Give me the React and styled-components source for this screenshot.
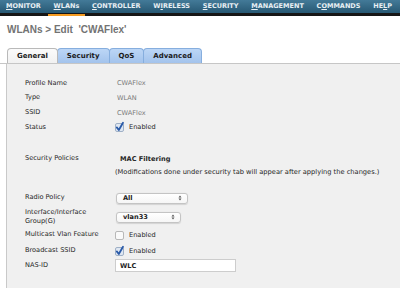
import React from "react";
import styled, { createGlobalStyle } from "styled-components";

const Global = createGlobalStyle`
  html, body { margin: 0; padding: 0; background: #ffffff; }
  body { font-family: "DejaVu Sans", Verdana, sans-serif; overflow: hidden; }
`;

const Page = styled.div`
  width: 400px;
  height: 288px;
  display: flex;
  flex-direction: column;
  background: #ffffff;
`;

const Nav = styled.nav`
  display: flex;
  justify-content: space-between;
  height: 16px;
  padding-right: 2px;
  background: linear-gradient(#437a98 0, #275873 13px, #161616 13px, #161616 16px);
`;

const NavItem = styled.a`
  box-sizing: border-box;
  height: 16px;
  padding: 0 6px 1px;
  font: bold 6.5px "DejaVu Sans", Verdana, sans-serif;
  line-height: 13px;
  color: #e8eff4;
  border-bottom: 2px solid ${(p) => (p.$active ? "#f49b22" : "transparent")};
  white-space: nowrap;
  u { text-decoration-thickness: 1px; text-underline-offset: 1px; }
`;

const Title = styled.h1`
  margin: 7px 0 0 7px;
  height: 14px;
  font: bold 10px "Liberation Sans", Arial, sans-serif;
  line-height: 14px;
  color: #737373;
  white-space: pre;
`;

const TabBar = styled.div`
  display: flex;
  margin-top: 11px;
  padding-left: 7px;
  border-bottom: 1px solid #c6c6c6;
`;

const Tab = styled.div`
  box-sizing: border-box;
  height: 15px;
  padding: 0 9px;
  margin-right: -1px;
  border: 1px solid ${(p) => (p.$active ? "#b9b9b9" : "#86aede")};
  border-bottom: none;
  border-radius: 4px 4px 0 0;
  background: ${(p) =>
    p.$active
      ? "linear-gradient(#fbfbfb, #f1f1f1)"
      : "linear-gradient(#bcd6f6, #a3c3ec)"};
  font: bold 7px "DejaVu Sans", Verdana, sans-serif;
  line-height: 14px;
  color: #1a1a1a;
  white-space: nowrap;
  position: relative;
  z-index: ${(p) => (p.$active ? 2 : 1)};
`;

const Panel = styled.div`
  flex: 1;
  margin-left: 6px;
  border-left: 1px solid #c9c9c9;
  background: #f0f0f0;
  padding: 12px 0 0 18px;
`;

const Row = styled.div`
  display: grid;
  grid-template-columns: 90px 1fr;
  align-items: center;
  height: ${(p) => p.$h}px;
  margin-top: ${(p) => p.$mt || 0}px;
`;

const Label = styled.div`
  font-size: 6.6px;
  line-height: 9.5px;
  color: #262626;
`;

const Value = styled.div`
  font-size: 6.6px;
  color: ${(p) => (p.$muted ? "#7a7a7a" : "#262626")};
  font-weight: ${(p) => (p.$bold ? "bold" : "normal")};
  padding-left: ${(p) => p.$indent || 0}px;
  display: flex;
  align-items: center;
  gap: 5px;
  white-space: nowrap;
`;

const Note = styled.div`
  font-size: 6.68px;
  color: #262626;
  white-space: nowrap;
`;

const SelectBox = styled.div`
  box-sizing: border-box;
  width: ${(p) => p.$w}px;
  height: 11px;
  margin-left: 1px;
  border: 1px solid #c4c4c4;
  border-radius: 3px;
  background: linear-gradient(#ffffff, #f6f6f6);
  box-shadow: 0 0.5px 1px rgba(0, 0, 0, 0.12);
  display: flex;
  align-items: center;
  justify-content: space-between;
  padding: 0 5px 0 6px;
  font: bold 6.6px "DejaVu Sans", Verdana, sans-serif;
  color: #222;
`;

const TextInput = styled.div`
  box-sizing: border-box;
  width: 121px;
  height: 13px;
  border: 1px solid #cdcdcd;
  background: #ffffff;
  display: flex;
  align-items: center;
  padding-left: 4px;
  font: bold 6.6px "DejaVu Sans", Verdana, sans-serif;
  color: #222;
`;

const Arrows = () => (
  <svg width="4" height="6" viewBox="0 0 4 6">
    <path d="M0.5 2.4 L2 0.6 L3.5 2.4 Z M0.5 3.6 L2 5.4 L3.5 3.6 Z" fill="#555" />
  </svg>
);

const Check = ({ checked }) => (
  <svg width="9" height="9" viewBox="0 0 9 9" style={{ overflow: "visible" }}>
    <rect
      x="0.5"
      y="0.5"
      width="8"
      height="8"
      rx="1.5"
      fill={checked ? "#dfe7f2" : "#fafafa"}
      stroke={checked ? "#9fb0c6" : "#b8b8b8"}
    />
    {checked && (
      <path
        d="M1.8 4.4 L3.8 7 L8 -0.2"
        fill="none"
        stroke="#2a5aa8"
        strokeWidth="1.8"
        strokeLinecap="round"
        strokeLinejoin="round"
      />
    )}
  </svg>
);

const navItems = [
  ["", "M", "ONITOR"],
  ["", "W", "LANs"],
  ["", "C", "ONTROLLER"],
  ["W", "I", "RELESS"],
  ["", "S", "ECURITY"],
  ["", "M", "ANAGEMENT"],
  ["C", "O", "MMANDS"],
  ["HE", "L", "P"],
];

export default function App() {
  return (
    <Page>
      <Global />
      <Nav>
        {navItems.map(([a, u, b], i) => (
          <NavItem key={i} $active={i === 1}>
            {a}
            <u>{u}</u>
            {b}
          </NavItem>
        ))}
      </Nav>
      <Title>{"WLANs > Edit  'CWAFlex'"}</Title>
      <TabBar>
        <Tab $active>General</Tab>
        <Tab>Security</Tab>
        <Tab>QoS</Tab>
        <Tab>Advanced</Tab>
      </TabBar>
      <Panel>
        <Row $h={14.67}>
          <Label>Profile Name</Label>
          <Value $muted $indent={2}>CWAFlex</Value>
        </Row>
        <Row $h={14.67}>
          <Label>Type</Label>
          <Value $muted $indent={2}>WLAN</Value>
        </Row>
        <Row $h={14.67}>
          <Label>SSID</Label>
          <Value $muted $indent={2}>CWAFlex</Value>
        </Row>
        <Row $h={14.67}>
          <Label>Status</Label>
          <Value>
            <Check checked />
            Enabled
          </Value>
        </Row>
        <Row $h={14} $mt={17}>
          <Label>Security Policies</Label>
          <Value $bold $indent={5}>MAC Filtering</Value>
        </Row>
        <Row $h={12}>
          <span />
          <Note>
            (Modifications done under security tab will appear after applying the changes.)
          </Note>
        </Row>
        <Row $h={19} $mt={11}>
          <Label>Radio Policy</Label>
          <Value>
            <SelectBox $w={72}>
              All
              <Arrows />
            </SelectBox>
          </Value>
        </Row>
        <Row $h={19}>
          <Label>
            Interface/Interface
            <br />
            Group(G)
          </Label>
          <Value>
            <SelectBox $w={65}>
              vlan33
              <Arrows />
            </SelectBox>
          </Value>
        </Row>
        <Row $h={17}>
          <Label>Multicast Vlan Feature</Label>
          <Value>
            <Check />
            Enabled
          </Value>
        </Row>
        <Row $h={15}>
          <Label>Broadcast SSID</Label>
          <Value>
            <Check checked />
            Enabled
          </Value>
        </Row>
        <Row $h={14}>
          <Label>NAS-ID</Label>
          <Value>
            <TextInput>WLC</TextInput>
          </Value>
        </Row>
      </Panel>
    </Page>
  );
}
